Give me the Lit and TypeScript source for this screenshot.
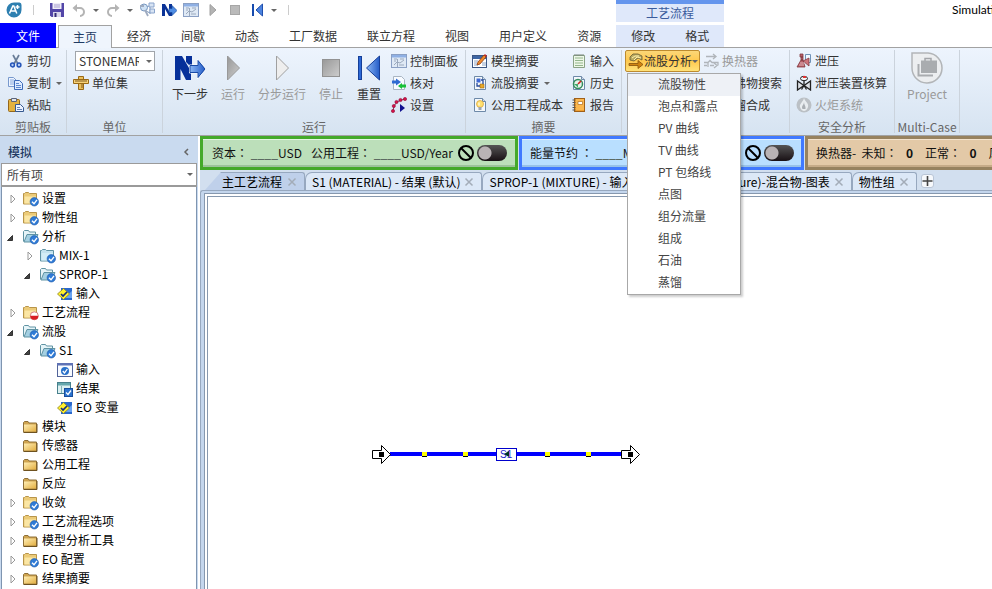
import { LitElement, html, svg, css, nothing } from "lit";
import { customElement, state } from "lit/decorators.js";
import { classMap } from "lit/directives/class-map.js";

const check = svg`<circle cx="11.300" cy="10.800" r="4.200" fill="#2f7bd6" stroke="#1a55a8" stroke-width=".6"/><path d="M9 10.800l2 2 3-4" fill="none" stroke="#fff" stroke-width="1.400"/>`;
const page = svg`<path d="M2.500 1.500h8l3 3v10h-11z" fill="#f4f8fc" stroke="#6d89a8"/><path d="M10.500 1.500v3h3" fill="#cfdcea" stroke="#6d89a8"/>`;
const yellowFolder = svg`<path d="M.5 2.500h1l1-1h3l1 1h7v10.500H.5z" fill="#eccb78" stroke="#b8954a"/><path d="M1.500 5.500h11.500v7H1.500z" fill="#fbe6a4"/>`;
const windowShape = svg`<rect x=".5" y="1.500" width="15" height="13" fill="#dfe9f5" stroke="#8ba0c4"/><path d="M1 2h14v2.500H1z" fill="#8fb0e4"/><path d="M3 12l3-3 3 1 4-3M3 6h3M9 6h4M3 8h2M8 12h5M6.500 6v8" stroke="#9ba9bd" fill="none"/>`;

const icons: Record<string, unknown> = {
  logo: svg`<path d="M8 .5h5.500Q15.500.5 15.500 3v5A7.500 7.500 0 1 1 8 .5z" fill="#2d7fb0"/><path d="M3.500 11.500L6.800 4h1l3 7.500M4.800 9h4.500M11.500 3v4M9.500 5h4" fill="none" stroke="#fff" stroke-width="1.500"/>`,
  save: svg`<path d="M1 1h14v14H2.500L1 13.500z" fill="#5346a8"/><path d="M3.500 1h9v6h-9z" fill="#f0eef8"/><path d="M5 3h6M5 5h6" stroke="#a8a0d0"/><path d="M4 10h8v5H4z" fill="#d8d5ea"/><path d="M5.500 11h2v4h-2z" fill="#332a78"/>`,
  undo: svg`<path d="M5 6h4a3.500 3.500 0 0 1 0 8" fill="none" stroke="#b4b4b4" stroke-width="2"/><path d="M1.500 6L6 2v8z" fill="#b4b4b4"/>`,
  redo: svg`<path d="M11 6H7a3.500 3.500 0 0 0 0 8" fill="none" stroke="#b4b4b4" stroke-width="2"/><path d="M14.500 6L10 2v8z" fill="#b4b4b4"/>`,
  flow: svg`<path d="M5 6l5-2M7 9l4 2M11 4v8" stroke="#7e96b8"/><path d="M10 1h5v4h-5zM11 7h4.500v4H11z" fill="#d8e4f4" stroke="#8aa4cc"/><circle cx="5" cy="5.500" r="3.500" fill="#cfe2f5" stroke="#7897c0"/><path d="M6 8l3 6M1 4h4" stroke="#9eabc0" stroke-width="1.800"/>`,
  next: svg`<path d="M1 14V2h3l4 7V2h3v12H8L4 7v7z" fill="#0a3296"/><path d="M8 6.500h3V3.500l5 5-5 5v-3H8z" fill="#4f8de4" stroke="#174aa0" stroke-width=".7"/>`,
  window: windowShape,
  play: svg`<path d="M5 2.500v11l6-5.500z" fill="#b4b4b4" stroke="#a0a0a0"/>`,
  stop: svg`<rect x="3.500" y="3.500" width="9" height="9" fill="#bababa" stroke="#a6a6a6"/>`,
  reset: svg`<path d="M3 2h2v12H3z" fill="#174cae"/><path d="M13.500 2v12L7 8z" fill="#4b83df" stroke="#204fae"/>`,
  cut: svg`<path d="M5 2l5 9M11 2l-5 9" stroke="#6a7e98" stroke-width="1.700"/><circle cx="4.500" cy="12" r="1.900" fill="#b8d0f5" stroke="#2454b8" stroke-width="1.500"/><circle cx="11" cy="12" r="1.900" fill="#b8d0f5" stroke="#2454b8" stroke-width="1.500"/>`,
  copy: svg`<path d="M.5 2.500h5l3 3v6h-8z" fill="#edf4ff" stroke="#7899cd"/><path d="M2 5h4M2 7h4M2 9h4" stroke="#88a9dc"/><path d="M6.500 5.500h5l3 3v6h-8z" fill="#dceaff" stroke="#3c6ab8"/><path d="M8 8.500h3M8 10.500h5M8 12.500h5" stroke="#5d88ce"/>`,
  paste: svg`<rect x=".5" y="2.500" width="11" height="12" rx="1" fill="#e4b23e" stroke="#94671a"/><path d="M3.500 1.500h5v3h-5z" fill="#dfe4ec" stroke="#5c6578"/><path d="M7.500 7.500h5l3 3v4h-8z" fill="#edf3ff" stroke="#35598f"/><path d="M9 10.500h3M9 12.500h5" stroke="#6484b8"/>`,
  units: svg`<path d="M5.500 1.500h5v13h-5z" fill="#ecc15b" stroke="#9a6a16"/><path d="M.5 4.500h15v4H.5z" fill="#f8d47a" stroke="#9a6a16"/><path d="M3 5v2M5 5v2M7 5v2M9 5v2M11 5v2M13 5v2M8 10h2M8 12h2" stroke="#80591a"/>`,
  verify: svg`<path d="M2.500 1.500h8l3 3v10h-11z" fill="#f8fbff" stroke="#a9b5c2"/><path d="M1 5.500h4V3.500l5 3.500-5 3.500v-2H1z" fill="#2f6bd2"/><path d="M15 12.500h-4v1.500L7 11l4-3v1.500h4z" fill="#18c038"/>`,
  setup: svg`<path d="M2 14l1-5 3-4 4-2 4-1" fill="none" stroke="#6d1c38" stroke-width=".8"/><g fill="#d8124a" stroke="#8c0830" stroke-width=".6"><circle cx="2" cy="14" r="1.600"/><circle cx="2.800" cy="9" r="1.600"/><circle cx="5.500" cy="5" r="1.600"/><circle cx="9.500" cy="3" r="1.600"/><circle cx="14" cy="2" r="1.600"/></g><path d="M9 7v8l5-4z" fill="#101090"/>`,
  model: svg`<rect x=".5" y="2.500" width="14" height="12" fill="#fff" stroke="#3c5784"/><path d="M1 3h13v3H1z" fill="#3d66a4"/><path d="M2 8h4M2 10h3M2 12h4M10 10h4M10 12h4" stroke="#8ca4c6"/><path d="M5 12l1-3 6-7 2 2-6 7z" fill="#ef8a2c" stroke="#8b3b10" stroke-width=".8"/><path d="M12 2l1-1 2 2-1 1z" fill="#c92828"/>`,
  streams: svg`${page}<path d="M4.500 3.500h4v4h-4z" fill="#3f68d2"/><path d="M8 9h4v4H8z" fill="#e8a828" stroke="#9a6812" stroke-width=".6"/><path d="M5 8v3h3M9 5h2v4" fill="none" stroke="#274a9a" stroke-width="1.300"/>`,
  bulb: svg`${page}<circle cx="8" cy="7" r="3.500" fill="#ffe070" stroke="#d8a030" stroke-width=".7"/><path d="M6.500 10h3v3h-3z" fill="#9ea5b0"/><path d="M7 5.500v3" stroke="#fff"/>`,
  input: svg`<path d="M2.500 2.500h11v12h-11z" fill="#edf7e8" stroke="#8ba286"/><path d="M4 5h8M4 7.500h8M4 10h8M4 12.500h8" stroke="#95b68d"/><path d="M4 1v2M6 1v2M8 1v2M10 1v2M12 1v2" stroke="#77857a"/>`,
  history: svg`${page}<circle cx="7" cy="9" r="4.500" fill="#e4f3ea" stroke="#368c5e" stroke-width="1.500"/><path d="M7 9l3-3" stroke="#d02020" stroke-width="1.600"/><path d="M3 9h4v3.500" fill="#40a868"/>`,
  report: svg`<rect x="3.500" y="1.500" width="10" height="13" fill="#f0a030" stroke="#a06018"/><path d="M5 2h8v11H5z" fill="#fbb74e"/><path d="M7 4.500h4.500v3H7z" fill="#fff" stroke="#b07020" stroke-width=".7"/><path d="M1.500 3h3M1.500 5.500h3M1.500 8h3M1.500 10.500h3M1.500 13h3" stroke="#555"/>`,
  analysis: svg`<path d="M2 7V4l3-3h5l4 2v4L10 5 6 8z" fill="#b9ab62" stroke="#665c34" stroke-width=".8"/><path d="M4 5l3-2h4M6 7l3-3 4 1" fill="none" stroke="#fff0ad"/><path d="M1 10.500h9V7.500l5 4-5 4v-3H1z" fill="#d08412" stroke="#88520a" stroke-width=".8"/>`,
  exchanger: svg`<path d="M3 3.500h9M10 1l3 2.500L10 6M1 9.500h4l2-2 2 2h6v3M1 12.500h3M7 12.500h4M5 10v4M11 10l3 2.500-3 2.500" fill="none" stroke="#b0b5ba" stroke-width="1.300"/>`,
  triangle: svg`<path d="M8 2l6 12H2z" fill="#e8f0fa" stroke="#4f78b0"/><path d="M5 8h6M5 11h6" stroke="#4f78b0"/>`,
  relief: svg`<path d="M9.500 1.500h5v8h-5z" fill="#f2f8ff" stroke="#6f93b8"/><path d="M4 1h3v3H4zM5 4h2v3H5zM1 14l4-7h2l2 7z" fill="#b86068" stroke="#803840" stroke-width=".8"/><path d="M7 8l6-3v8z" fill="#cd747b" stroke="#803840" stroke-width=".8"/><path d="M4 10h5M3 12h5" stroke="#f2d8dc" stroke-width=".7"/>`,
  valve: svg`<path d="M1.500 6v9L14.500 6v9z" fill="#dde1e6" stroke="#222" stroke-width="1.300"/><path d="M8 10.500V5M5.500 14.500L8 10.500l2.500 4" fill="none" stroke="#222" stroke-width="1.300"/><ellipse cx="8" cy="3.500" rx="3.500" ry="2.200" fill="#f4f4f4" stroke="#222"/><path d="M7 1h3v2H7z" fill="#d33"/>`,
  flare: svg`<circle cx="8" cy="8" r="7.500" fill="#bbc0c5"/><path d="M8 1c1 4 5 5 4 9-1 3-3 4-4 4s-3-1-4-4c-1-3 3-5 4-9z" fill="#e9edf0"/><path d="M8 5c0 3 2 4 1.500 7h-3C5 9 8 8 8 5z" fill="#a9aeb3"/>`,
  folder: svg`<defs><linearGradient id="gold" x2="1" y2="1"><stop stop-color="#ffeeb4"/><stop offset="1" stop-color="#e3af42"/></linearGradient></defs><path d="M.5 3.500l1-1h3.500l1 1.500h7.500v9H.5z" fill="#cfa450" stroke="#8f7038"/><path d="M1 5.500h12v7H1z" fill="url(#gold)"/><path d="M.5 13.500h13.500V5" fill="none" stroke="#6e5220"/>`,
  folderOk: svg`${yellowFolder}${check}`,
  folderStop: svg`${yellowFolder}<circle cx="11.300" cy="10.800" r="4" fill="#fff" stroke="#c66" stroke-width=".8"/><path d="M7.300 10.800h8a4 4 0 0 1-8 0z" fill="#d81c24"/>`,
  blueOk: svg`<path d="M.5 2.500h1l1-1h3l1 1h7v10.500H.5z" fill="#c3e2ee" stroke="#6093a3"/><path d="M1.500 5h11.500v7.500H1.500z" fill="#d3edf6"/>${check}`,
  blueOpen: svg`<path d="M.5 12.500v-10l1-1h4l1 1.500h6v3" fill="#e6f4f8" stroke="#6093a3"/><path d="M1 13L4 5.500h11L12 13z" fill="#a4d0e2" stroke="#6093a3"/>${check}`,
  form: svg`<path d="M4 2h11v12H4z" fill="#2b68cc"/><path d="M7 12h8V5z" fill="#69a3f0"/><path d="M.5 8L6.500 2.500 12.500 8l-6 5.500z" fill="#fff02a" stroke="#8b8124" stroke-width=".8"/><path d="M4 8l2 2 4-4" fill="none" stroke="#102a80" stroke-width="1.700"/>`,
  inputForm: svg`<rect x=".5" y="1.500" width="15" height="13" fill="#f8fbff" stroke="#516399"/><path d="M0 1h16v2.500H0z" fill="#5f72b5"/><circle cx="8" cy="9" r="4" fill="#2870ca"/><path d="M5.800 9l1.700 2 2.800-4" fill="none" stroke="#fff" stroke-width="1.300"/>`,
  resultForm: svg`<rect x=".5" y="1.500" width="13" height="11" fill="#ddf0f1" stroke="#47808c"/><path d="M1 2h12v2.500H1z" fill="#65a7ad"/><path d="M4.500 5v7" stroke="#84b5b9"/><rect x="7.500" y="7.500" width="8" height="8" fill="#2c73ce" stroke="#174d9c"/><path d="M9 11.500l2 2 3-4" fill="none" stroke="#fff" stroke-width="1.300"/>`,
};

const icon = (name: string) => html`<svg class="icon" viewBox="0 0 16 16" aria-hidden="true">${icons[name]}</svg>`;

const bigIcons: Record<string, unknown> = {
  next: svg`<path d="M1 28V4h7l7 12V4h2v24h-5L6.500 17v11z" fill="#06309a"/><path d="M12 4h6v12l-6-6z" fill="#06309a"/><path d="M15.500 13h8V7.500L32 17l-8.500 10v-6h-8z" fill="url(#blue)" stroke="#fff"/><path d="M16 13.500h8v-5L31 17l-7 8.500v-5h-8z" fill="url(#blue)" stroke="#1a4ba6"/>`,
  run: svg`<path d="M10.500 4v24l12-12z" fill="url(#grey)" stroke="#999"/>`,
  step: svg`<path d="M10.500 4v24l12-12z" fill="#eee" stroke="#a0a0a0"/>`,
  stop: svg`<rect x="7.500" y="7.500" width="17" height="17" fill="url(#grey)" stroke="#929292"/>`,
  reset: svg`<rect x="5.500" y="4.500" width="3" height="23" fill="#2c68d6" stroke="#153f98"/><path d="M26.500 4v24l-13-12z" fill="url(#blue)" stroke="#173f99"/>`,
  project: svg`<path d="M1 1h16a15 15 0 1 1-16 15z" fill="#eceef0" stroke="#b2b5b8" stroke-width="1.500"/><path d="M14 9V6.500h6V9" fill="none" stroke="#a2a5a9" stroke-width="1.500"/><path d="M7.500 12v11.500H22" fill="none" stroke="#a9acaf" stroke-width="2"/><path d="M10 8.500h16v12.500H10z" fill="#a9acaf"/>`,
};

const bigIcon = (name: string) => html`<svg class="big-icon" viewBox="0 0 32 32" aria-hidden="true">
  <defs>
    <linearGradient id="blue"><stop stop-color="#8cb8f5"/><stop offset="1" stop-color="#245cc8"/></linearGradient>
    <linearGradient id="grey" x2="1" y2="1"><stop stop-color="#989898"/><stop offset="1" stop-color="#cdcdcd"/></linearGradient>
  </defs>${bigIcons[name]}</svg>`;

const command = (name: string, text: string, disabled = false, menu = false) => html`
  <button class="command" ?disabled=${disabled}>${icon(name)}<span>${text}</span>${menu ? html`<i class="caret"></i>` : nothing}</button>`;
const bigCommand = (name: string, text: string, disabled = false) => html`
  <button class="big-command" ?disabled=${disabled}>${bigIcon(name)}<span>${text}</span></button>`;

interface Row { level: number; icon: string; text: string; open?: boolean }
const rows: Row[] = [
  { level: 0, icon: "folderOk", text: "设置", open: false },
  { level: 0, icon: "folderOk", text: "物性组", open: false },
  { level: 0, icon: "blueOpen", text: "分析", open: true },
  { level: 1, icon: "blueOk", text: "MIX-1", open: false },
  { level: 1, icon: "blueOpen", text: "SPROP-1", open: true },
  { level: 2, icon: "form", text: "输入" },
  { level: 0, icon: "folderStop", text: "工艺流程", open: false },
  { level: 0, icon: "blueOpen", text: "流股", open: true },
  { level: 1, icon: "blueOpen", text: "S1", open: true },
  { level: 2, icon: "inputForm", text: "输入" },
  { level: 2, icon: "resultForm", text: "结果" },
  { level: 2, icon: "form", text: "EO 变量" },
  { level: 0, icon: "folder", text: "模块" },
  { level: 0, icon: "folder", text: "传感器" },
  { level: 0, icon: "folder", text: "公用工程" },
  { level: 0, icon: "folder", text: "反应" },
  { level: 0, icon: "folderOk", text: "收敛", open: false },
  { level: 0, icon: "folderOk", text: "工艺流程选项", open: false },
  { level: 0, icon: "folder", text: "模型分析工具", open: false },
  { level: 0, icon: "folderOk", text: "EO 配置", open: false },
  { level: 0, icon: "folder", text: "结果摘要", open: false },
];

const ribbonTabs = ["主页", "经济", "间歇", "动态", "工厂数据", "联立方程", "视图", "用户定义", "资源"];
const analyses = ["流股物性", "泡点和露点", "PV 曲线", "TV 曲线", "PT 包络线", "点图", "组分流量", "组成", "石油", "蒸馏"];
const documents = ["主工艺流程", "S1 (MATERIAL) - 结果 (默认)", "SPROP-1 (MIXTURE) - 输入", "SPROP-1(Mixture)-混合物-图表", "物性组"];

@customElement("app-root")
export class AppRoot extends LitElement {
  @state() private activeDocument = 0;

  static styles = css`
    :host {
      display: flex; flex-direction: column; height: 100vh; overflow: hidden;
      font: 12px/18px "Noto Sans CJK SC", sans-serif; color: #111; background: #fff;
    }
    * { box-sizing: border-box; }
    button, select { font: inherit; color: inherit; background: none; border: 0; padding: 0; margin: 0; white-space: nowrap; }
    .icon { width: 16px; height: 16px; flex: none; display: block; }
    .caret { width: 0; height: 0; border: 3px solid transparent; border-top-color: #666; border-bottom: 0; flex: none; }

    .title { display: flex; flex: none; height: 22px; padding-left: 6px; }
    .quick { display: flex; flex: none; align-items: center; width: 610px; gap: 6px; height: 20px; }
    .quick button { display: block; flex: none; }
    .quick .divider { flex: none; width: 1px; height: 10px; background: #ccc; margin: 0 9px 0 5px; }
    .context-title { flex: none; width: 108px; background: #dfe8fa; border-top: 4px solid #6495ed; text-align: center; color: #3a5b9c; line-height: 17px; }
    .document-title { margin-left: 228px; line-height: 20px; white-space: nowrap; color: #000; font-family: Lato, sans-serif; }

    .tabs { display: flex; flex: none; height: 26px; padding-top: 3px; margin-bottom: -1px; color: #333; z-index: 1; }
    .tabs button { padding: 0 15px; height: 22px; line-height: 22px; }
    .tabs .file { width: 56px; height: 25px; margin: -2px 2px 0 0; background: #00f; color: #fff; padding: 0; line-height: 26px; }
    .tabs .home { background: #eff5fd; border: 1px solid #a2a2a2; border-bottom: 0; padding: 0 14px; height: 23px; line-height: 20px; color: #1f3a63; }
    .tabs .context { background: #dfe8fa; }

    .ribbon { display: flex; flex: none; height: 89px; border-top: 1px solid #a2a2a2; border-bottom: 1px solid #a2a2a2; background: linear-gradient(#edf4fd, #d6e3f1); color: #333; }
    .group { display: flex; flex-direction: column; flex: none; margin: 2px 0; border-right: 1px solid #cbd3dc; }
    .group-body { display: flex; height: 67px; flex: none; }
    .group-label { text-align: center; color: #666; line-height: 19px; }
    .column { display: flex; flex-direction: column; }
    .command { display: flex; align-items: center; gap: 3px; height: 22px; flex: none; }
    .command .caret { margin-left: 2px; }
    button:disabled { color: #9a9a9a; }
    .big-command { display: flex; flex-direction: column; align-items: center; padding-top: 2px; line-height: 20px; }
    .big-icon { width: 32px; height: 32px; display: block; flex: none; }
    .clipboard { width: 67px; } .clipboard .column { padding-left: 8px; }
    .units { width: 96px; } .units .column { padding-left: 6px; }
    .unit-box { width: 80px; height: 20px; margin: 1px 0 1px 2px; border: 1px solid #a0a5ab; background: #fff; display: flex; align-items: center; }
    .unit-box select { appearance: none; width: 60px; margin-left: 3px; height: 18px; overflow: hidden; text-overflow: clip; }
    .unit-box .caret { margin-left: 7px; }
    .run { width: 303px; }
    .run-grid { display: grid; grid-template-columns: 54px 32px 66px 32px 44px; justify-items: center; }
    .summary { width: 156px; } .summary .group-body { padding-left: 6px; gap: 8px; }
    .analysis { width: 168px; } .analysis .group-body { padding-left: 3px; gap: 3px; }
    .safety { width: 105px; } .safety .column { padding-left: 6px; }
    .project { width: 65px; } .project .group-body { justify-content: center; }
    .drop { position: relative; width: 75px; }
    .drop .trigger { display: flex; align-items: center; width: 75px; height: 22px; padding-left: 2px; border: 1px solid #bd8b2f; border-radius: 2px; background: linear-gradient(#fbd778, #ffc94e 50%, #ffe27a); }
    .menu { position: absolute; z-index: 5; left: 2px; top: 23px; width: 114px; margin: 0; padding: 0; list-style: none; background: #fff; border: 1px solid #a8a8a8; box-shadow: 2px 2px 2px #0003; }
    .menu button { display: block; width: 100%; height: 22px; text-align: left; padding: 0 0 2px 30px; color: #444; }
    .menu .current { background: #eef1f6; }

    .workspace { display: flex; flex: 1; min-height: 0; }
    .side { width: 198px; flex: none; display: flex; flex-direction: column; background: #c9daef; padding: 0 1px; }
    .side-title { display: flex; align-items: center; justify-content: space-between; height: 27px; padding: 4px 7px 0; color: #1f3a63; font: inherit; font-weight: 500; margin: 0; }
    .side-title svg { width: 8px; height: 8px; display: block; }
    .filter { display: flex; align-items: center; height: 24px; flex: none; background: #fff; border: 1px solid #9a9a9a; border-bottom-width: 2px; padding: 0 3px 0 5px; color: #444; }
    .filter select { appearance: none; flex: 1; }
    .tree { flex: 1; min-height: 0; overflow: hidden; margin: 0; padding: 2px 0 0 4px; list-style: none; background: #fff; border: solid #7f95b0; border-width: 0 1px; }
    .row { display: flex; align-items: center; height: 19px; gap: 3px; color: #000; white-space: nowrap; }
    .level1 { padding-left: 17px; }
    .level2 { padding-left: 34px; }
    .row > span:last-child { line-height: 17px; padding-bottom: 2px; }
    .expander { width: 14px; height: 12px; flex: none; }
    .expander svg { width: 14px; height: 12px; display: block; }

    .main { flex: 1; min-width: 0; display: flex; flex-direction: column; background: #d2dfef; margin-left: 2px; }
    .dash { display: flex; flex: none; height: 34px; gap: 1px; overflow: hidden; }
    .panel { display: flex; align-items: center; height: 34px; flex: none; border: 3px solid #44a92a; background: #bcdfba; padding: 0 8px 0 9px; box-shadow: inset 0 1px #e4f4e2, inset 0 -2px #9cc29b; white-space: pre; color: #111; }
    .capital { width: 318px; }
    .energy { width: 285px; border-color: #4079ff; background: #b9dfff; padding: 0 7px 0 8px; box-shadow: inset 0 1px #def0ff, inset 0 -2px #98c2e8; }
    .heat { flex: 1 0 187px; border-color: #97825f; background: #e3c9a7; padding: 0 8px; box-shadow: inset 0 1px #f3e2cc, inset 0 -2px #c6ab88; }
    .heat > span { margin-right: 12px; }
    .heat b { margin-left: 3px; }
    .colon { font-family: "Noto Sans CJK TC", sans-serif; }
    .blank { color: #5c6a62; font-weight: 700; }
    .utility { margin-left: 9px; }
    .ban { width: 18px; height: 18px; margin-left: auto; flex: none; }
    .toggle { appearance: none; width: 30px; height: 16px; margin: 0 0 0 2px; border-radius: 8px; flex: none; background: radial-gradient(circle at 8px 8px, #b9b3b5 6px, transparent 7px), linear-gradient(#555, #181014); }
    .documents { display: flex; flex: none; height: 20px; padding: 2px 0 0 5px; }
    .document { display: flex; align-items: center; height: 18px; flex: none; padding: 0 7px 0 6px; background: #dce8f7; border: 1px solid #97a8bf; border-bottom: 0; border-radius: 7px 3px 0 0; white-space: nowrap; color: #000; gap: 4px; }
    .document.active { background: #bfd0ea; padding-left: 17px; border-radius: 0 3px 0 0; border-left: 0; clip-path: polygon(16px 0, 100% 0, 100% 100%, 0 100%); gap: 5px; }
    .close { width: 10px; height: 10px; display: block; }
    .close svg { width: 10px; height: 10px; display: block; }
    .add { width: 13px; height: 14px; margin: 2px 0 0 4px; background: #f6f8fb; border: 1px solid #b9c5d6; border-radius: 3px; }
    .add svg { width: 11px; height: 12px; display: block; }
    .frame { flex: 1; min-height: 0; display: flex; padding: 2px 0 0 3px; background: #c4d6ed; border-top: 1px solid #97a8bf; border-left: 1px solid #97a8bf; border-radius: 3px 0 0 0; }
    .sheet { flex: 1; background: #fff; border: solid #8798ae; border-width: 1px 0 0 1px; padding: 2px 0 0 2px; display: flex; }
    .canvas { flex: 1; border: solid #8798ae; border-width: 1px 0 0 1px; position: relative; overflow: hidden; }
    .stream { position: absolute; left: 162px; top: 244px; width: 272px; height: 24px; font: 10px "Liberation Sans", sans-serif; }
  `;

  private quickAccess() {
    const item = (name: string, label: string, disabled = false) => html`<button aria-label=${label} ?disabled=${disabled}>${icon(name)}</button>`;
    return html`<nav class="quick" aria-label="快速访问">
      ${item("logo", "应用程序")}<span class="divider"></span>
      ${item("save", "保存")}${item("undo", "撤消", true)}<i class="caret"></i>
      ${item("redo", "重做", true)}<i class="caret"></i>
      ${item("flow", "工艺流程")}${item("next", "下一步")}${item("window", "控制面板")}
      ${item("play", "运行", true)}${item("stop", "停止", true)}${item("reset", "重置")}<i class="caret"></i><span class="divider"></span>
    </nav>`;
  }

  private ribbon() {
    return html`<section class="ribbon" aria-label="主页">
      <div class="group clipboard"><div class="group-body"><div class="column">
        ${command("cut", "剪切")}${command("copy", "复制", false, true)}${command("paste", "粘贴")}
      </div></div><div class="group-label">剪贴板</div></div>
      <div class="group units"><div class="group-body"><div class="column">
        <div class="unit-box"><select aria-label="单位集"><option>STONEMAR</option></select><i class="caret"></i></div>
        ${command("units", "单位集")}
      </div></div><div class="group-label">单位</div></div>
      <div class="group run"><div class="group-body">
        <div class="run-grid">
          ${bigCommand("next", "下一步")}${bigCommand("run", "运行", true)}${bigCommand("step", "分步运行", true)}${bigCommand("stop", "停止", true)}${bigCommand("reset", "重置")}
        </div>
        <div class="column">${command("window", "控制面板")}${command("verify", "核对")}${command("setup", "设置")}</div>
      </div><div class="group-label">运行</div></div>
      <div class="group summary"><div class="group-body">
        <div class="column">${command("model", "模型摘要")}${command("streams", "流股摘要", false, true)}${command("bulb", "公用工程成本")}</div>
        <div class="column">${command("input", "输入")}${command("history", "历史")}${command("report", "报告")}</div>
      </div><div class="group-label">摘要</div></div>
      <div class="group analysis"><div class="group-body">
        <div class="drop">
          <button class="trigger" aria-haspopup="menu" aria-expanded="true">${icon("analysis")}<span>流股分析</span><i class="caret"></i></button>
          <ul class="menu" role="menu">
            ${analyses.map((text, i) => html`<li role="none"><button role="menuitem" class=${classMap({ current: i === 0 })}>${text}</button></li>`)}
          </ul>
        </div>
        <div class="column">${command("exchanger", "换热器", true)}${command("triangle", "共沸物搜索")}${command("triangle", "蒸馏合成")}</div>
      </div><div class="group-label">分析</div></div>
      <div class="group safety"><div class="group-body"><div class="column">
        ${command("relief", "泄压")}${command("valve", "泄压装置核算")}${command("flare", "火炬系统", true)}
      </div></div><div class="group-label">安全分析</div></div>
      <div class="group project"><div class="group-body">${bigCommand("project", "Project", true)}</div><div class="group-label">Multi-Case</div></div>
    </section>`;
  }

  private row(r: Row) {
    const arrow = r.open
      ? html`<svg viewBox="0 0 14 12"><path d="M1.500 9.500h5v-5z" fill="#444" stroke="#333"/></svg>`
      : html`<svg viewBox="0 0 14 12"><path d="M5 2v8l4-4z" fill="#fff" stroke="#999"/></svg>`;
    return html`<li class="row level${r.level}" role="treeitem" aria-level=${r.level + 1}>
      ${r.open === undefined ? html`<span class="expander"></span>` : html`<button class="expander" aria-label=${r.open ? "折叠" : "展开"}>${arrow}</button>`}
      ${icon(r.icon)}<span>${r.text}</span></li>`;
  }

  private toggle(label: string) {
    return html`<svg class="ban" viewBox="0 0 18 18" aria-hidden="true"><circle cx="9" cy="9" r="7" fill="none" stroke="#000" stroke-width="2"/><path d="M4 4l10 10" stroke="#000" stroke-width="2"/></svg>
      <input class="toggle" type="checkbox" role="switch" aria-label=${label}>`;
  }

  render() {
    const colon = html`<span class="colon">：</span>`;
    return html`
      <header class="title">
        ${this.quickAccess()}
        <div class="context-title">工艺流程</div>
        <div class="document-title">Simulation</div>
      </header>
      <nav class="tabs" aria-label="功能区">
        <button class="file">文件</button>
        ${ribbonTabs.map((text, i) => html`<button class=${classMap({ home: i === 0 })}>${text}</button>`)}
        <button class="context">修改</button><button class="context">格式</button>
      </nav>
      ${this.ribbon()}
      <div class="workspace">
        <aside class="side">
          <h2 class="side-title">模拟<button aria-label="收起"><svg viewBox="0 0 8 8"><path d="M6 1L3 4l3 3" fill="none" stroke="#666" stroke-width="1.500"/></svg></button></h2>
          <div class="filter"><select aria-label="筛选"><option>所有项</option></select><i class="caret"></i></div>
          <ul class="tree" role="tree">${rows.map((r) => this.row(r))}</ul>
        </aside>
        <main class="main">
          <div class="dash">
            <section class="panel capital"><span>资本${colon}</span><span class="blank"> ____</span><span>USD</span><span class="utility">公用工程${colon}</span><span class="blank"> ____</span><span>USD/Year</span>${this.toggle("资本")}</section>
            <section class="panel energy"><span>能量节约 ${colon}</span><span class="blank"> ____</span><span>MW</span>${this.toggle("能量")}</section>
            <section class="panel heat"><span>换热器-  未知${colon}  <b>0</b></span><span>正常${colon}  <b>0</b></span><span>风险${colon}  <b>0</b></span></section>
          </div>
          <div class="documents" role="tablist">
            ${documents.map((text, i) => html`<div class=${classMap({ document: true, active: i === this.activeDocument })}>
              <button role="tab" aria-selected=${i === this.activeDocument} @click=${() => (this.activeDocument = i)}>${text}</button>
              <button class="close" aria-label="关闭"><svg viewBox="0 0 10 10"><path d="M1.500 1.500l7 7M8.500 1.500l-7 7" stroke="#a3acb8" stroke-width="1.500"/></svg></button>
            </div>`)}
            <button class="add" aria-label="新建"><svg viewBox="0 0 11 12"><path d="M5.500 1v10M.5 6h10" stroke="#444" stroke-width="1.600"/></svg></button>
          </div>
          <div class="frame"><div class="sheet"><div class="canvas">
            <svg class="stream" viewBox="0 0 272 24" role="img" aria-label="S1">
              <path d="M20 13h232" stroke="#00f" stroke-width="4"/>
              <path d="M52 11h5v4h-5zM93 11h5v4h-5zM175 11h5v4h-5zM216 11h5v4h-5z" fill="#ff0"/>
              <path d="M52 15.500h5M93 15.500h5M175 15.500h5M216 15.500h5" stroke="#000"/>
              <path d="M2.500 9.500h9v-5l9 9-9 9v-5h-9zM251.500 9.500h9v-5l9 9-9 9v-5h-9z" fill="#fff" stroke="#000"/>
              <path d="M9 11h5v5H9zM258 11h5v5h-5z" fill="#000"/>
              <rect x="126.500" y="7.500" width="20" height="12" fill="#fff" stroke="#00c"/>
              <text x="130" y="17" fill="#22c">S1</text>
              <path d="M134 13l5-3v6z" fill="#032"/>
            </svg>
          </div></div></div>
        </main>
      </div>`;
  }
}
